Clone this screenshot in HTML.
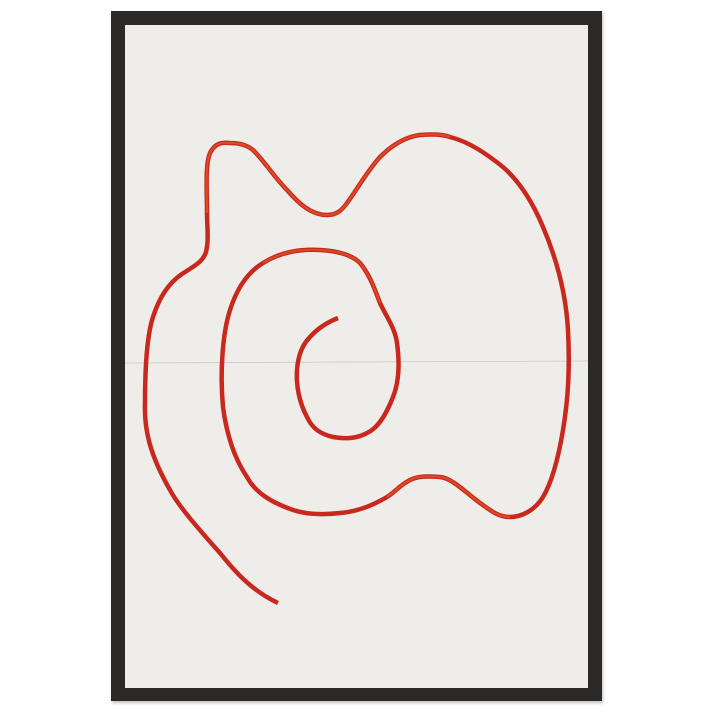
<!DOCTYPE html>
<html><head><meta charset="utf-8"><style>
html,body{margin:0;padding:0;background:#fff;width:713px;height:713px;overflow:hidden}
.frame{position:absolute;left:111px;top:11px;width:491px;height:690px;background:#2b2a29;box-shadow:1px 2px 3px rgba(0,0,0,.25)}
.mat{position:absolute;left:125px;top:25px;width:463px;height:663px;background:#eeede9}
svg{position:absolute;left:0;top:0}
</style></head><body>
<div class="frame"></div>
<div class="mat"></div>
<svg width="713" height="713" viewBox="0 0 713 713">
<line x1="125" y1="363" x2="588" y2="361" stroke="#c9c9c9" stroke-width="0.8"/>
<path fill="none" stroke="#c9281e" stroke-width="4.5" stroke-linecap="butt" stroke-linejoin="round"
d="M278,603 C250,590 232,568 220,553 C195,525 178,505 170,490 C150,455 144,430 145,403 C145,365 147,335 153,317 C160,295 170,282 182,274 C194,266 203,262 206,252 C209,240 207,226 207,213 C207,190 205,165 210,153 C215,143 222,142 230,143 C240,143 247,145 253,150 C265,162 275,178 287,190 C300,205 312,215 327,215 C337,215 342,210 347,203 C358,188 368,170 380,157 C392,145 405,137 420,135 C432,134 442,134 450,137 C470,142 488,155 503,167 C520,182 533,203 543,227 C558,262 566,295 568,330 C570,370 568,400 563,430 C558,460 552,482 543,497 C535,510 522,517 510,517 C498,517 490,510 480,503 C465,492 452,478 440,477 C428,476 418,476 410,480 C400,485 395,492 387,497 C372,506 355,512 340,513 C322,515 305,514 293,510 C270,502 255,492 247,477 C232,455 226,430 223,407 C220,375 222,335 230,310 C237,288 248,272 263,263 C282,251 302,249 320,250 C338,251 352,255 360,263 C370,275 375,290 380,303 C387,318 395,328 397,343 C400,365 399,382 393,397 C386,415 378,428 367,433 C356,439 345,439 333,437 C320,434 312,428 307,417 C299,402 296,385 297,370 C298,356 302,345 310,337 C318,328 328,322 338,318"/>
<path fill="none" stroke="#ee6a2a" stroke-width="2" opacity="0.55"
d="M207,213 C207,190 205,165 210,153 C215,143 222,142 230,143 C240,143 247,145 253,150 C265,162 275,178 287,190 C300,205 312,215 327,215 C337,215 342,210 347,203 C358,188 368,170 380,157 C392,145 405,137 420,135 C432,134 442,134 450,137"/>
<path fill="none" stroke="#ee6a2a" stroke-width="2" opacity="0.55"
d="M510,517 C498,517 490,510 480,503 C465,492 452,478 440,477 C428,476 418,476 410,480 C400,485 395,492 387,497"/>
<path fill="none" stroke="#ee6a2a" stroke-width="2" opacity="0.5"
d="M263,263 C282,251 302,249 320,250 C338,251 352,255 360,263 C370,275 375,290 380,303"/>
</svg>
</body></html>
